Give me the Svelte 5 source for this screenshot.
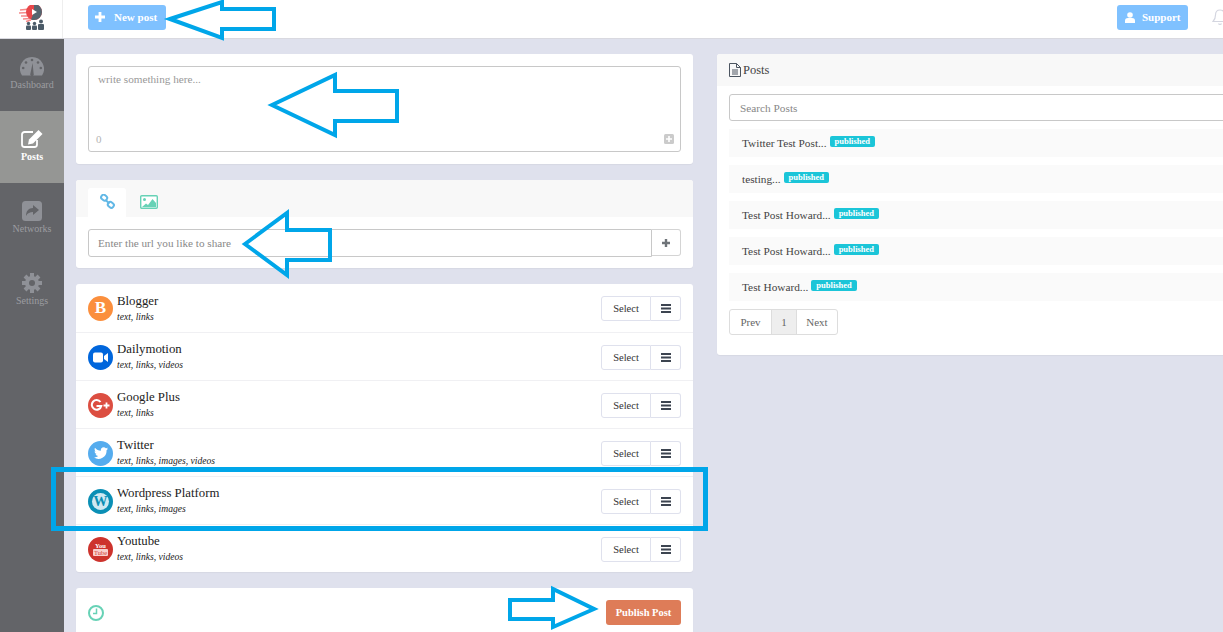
<script lang="ts">
    const networks = [
        { name: "Blogger", caps: "text, links", icon: "blogger", color: "#fb8f3d" },
        { name: "Dailymotion", caps: "text, links, videos", icon: "dailymotion", color: "#0066dc" },
        { name: "Google Plus", caps: "text, links", icon: "google", color: "#dc4e41" },
        { name: "Twitter", caps: "text, links, images, videos", icon: "twitter", color: "#55acee" },
        { name: "Wordpress Platform", caps: "text, links, images", icon: "wordpress", color: "#0a8fb5" },
        { name: "Youtube", caps: "text, links, videos", icon: "youtube", color: "#cd332d" },
    ];

    const posts = [
        "Twitter Test Post...",
        "testing...",
        "Test Post Howard...",
        "Test Post Howard...",
        "Test Howard...",
    ];
</script>

<div class="page">
    <header class="topbar">
        <div class="logo">
            <svg width="28" height="26" viewBox="0 0 28 26">
                <path d="M1 5l10-1M0 8l10-.5M2 11l8 0M4 14l7-.5M7 16.500l5-1.500" stroke="#f58a8a" stroke-width="1.500" fill="none" />
                <circle cx="15" cy="7" r="8" fill="#e8474a" />
                <path d="M15-1a8 8 0 0 1 0 16 8 8 0 0 1-3-.6L15 7z" fill="#56656f" />
                <path d="M13 4l5 3-5 3z" fill="#fff" />
                <g fill="#4b5b68">
                    <circle cx="9.500" cy="18.500" r="1.700" /><rect x="7" y="20.500" width="5" height="4.500" rx="1" />
                    <circle cx="15.500" cy="18.500" r="1.700" /><rect x="13" y="20.500" width="5" height="4.500" rx="1" />
                    <circle cx="22" cy="16.500" r="2" /><rect x="19" y="19" width="6" height="6" rx="1" />
                </g>
            </svg>
        </div>
        <div class="topbar-body">
            <button type="button" class="top-btn new-post">
                <svg width="10" height="10" viewBox="0 0 10 10"><path d="M5 0v10M0 5h10" stroke="#fff" stroke-width="2.800" /></svg>
                New post
            </button>
            <div class="top-right">
                <button type="button" class="top-btn support">
                    <svg width="10" height="11" viewBox="0 0 10 11" fill="#fff"><circle cx="5" cy="3" r="2.800" /><path d="M0 11V8.500C0 6.800 1.500 6 2.800 6h4.400C8.500 6 10 6.800 10 8.500V11z" /></svg>
                    Support
                </button>
                <svg class="bell" width="16" height="18" viewBox="0 0 16 18" fill="none" stroke="#d4d6e0" stroke-width="1.200">
                    <path d="M8 2c3 0 4.500 2 4.500 5 0 4 1 5 2.500 6.500H1C2.500 12 3.500 11 3.500 7 3.500 4 5 2 8 2z" />
                    <path d="M6.500 15.500c.5 1.200 2.500 1.200 3 0" />
                </svg>
            </div>
        </div>
    </header>

    <div class="shell">
        <nav class="sidebar">
            <div class="nav-item">
                <svg width="24" height="20" viewBox="0 0 24 20" fill="#8f9197">
                    <path d="M12 0a12 12 0 0 1 10 18.600H2A12 12 0 0 1 12 0z" />
                    <g fill="#636468"><circle cx="12" cy="3" r="1.300" /><circle cx="6" cy="5.500" r="1.300" /><circle cx="18" cy="5.500" r="1.300" /><circle cx="3.200" cy="11" r="1.300" /><circle cx="20.800" cy="11" r="1.300" /></g>
                    <path d="M12.600 6l1 10.500a1.800 1.800 0 1 1-3.200 0z" fill="#636468" />
                </svg>
                <span>Dashboard</span>
            </div>
            <div class="nav-item active">
                <svg width="24" height="20" viewBox="0 0 24 20" fill="none">
                    <path d="M17 11v4.500a2.500 2.500 0 0 1-2.500 2.500h-10A2.500 2.500 0 0 1 2 15.500v-10A2.500 2.500 0 0 1 4.500 3H13" stroke="#fff" stroke-width="1.800" />
                    <path d="M18.500 1l4 4-9.500 9.500-5 1 1-5z" fill="#fff" />
                </svg>
                <span>Posts</span>
            </div>
            <div class="nav-item">
                <svg width="20" height="20" viewBox="0 0 20 20">
                    <rect width="20" height="20" rx="3.500" fill="#8f9197" />
                    <path d="M11 4l6 5-6 5v-3C8 11 5.500 12 4 15c0-5 2.500-8 7-8z" fill="#636468" />
                </svg>
                <span>Networks</span>
            </div>
            <div class="nav-item">
                <svg width="20" height="20" viewBox="0 0 20 20">
                    <path d="M10 0v20M0 10h20M3 3l14 14M17 3L3 17" stroke="#8f9197" stroke-width="4" />
                    <circle cx="10" cy="10" r="7" fill="#8f9197" />
                    <circle cx="10" cy="10" r="3" fill="#636468" />
                </svg>
                <span>Settings</span>
            </div>
        </nav>

        <main class="content">
            <div class="col-left">
                <section class="card compose">
                    <div class="textarea">
                        <span class="placeholder">write something here...</span>
                        <span class="count">0</span>
                    </div>
                    <svg class="expand" width="10" height="10" viewBox="0 0 10 10">
                        <rect width="10" height="10" rx="1.500" fill="#cbcbcb" />
                        <path d="M5 2v6M2 5h6" stroke="#fff" stroke-width="1.600" />
                    </svg>
                </section>

                <section class="card attach">
                    <div class="tabs">
                        <div class="tab current">
                            <svg width="15" height="15" viewBox="0 0 15 15" fill="none" stroke="#62b8e6" stroke-width="2">
                                <rect x="1.200" y="1" width="6" height="5" rx="2.200" transform="rotate(40 4 3.500)" />
                                <rect x="7.800" y="8.500" width="6" height="5" rx="2.200" transform="rotate(40 11 11)" />
                                <path d="M5.500 6l4 3.500" />
                            </svg>
                        </div>
                        <div class="tab">
                            <svg width="18" height="14" viewBox="0 0 18 14">
                                <rect x=".7" y=".7" width="16.600" height="12.600" rx="1" fill="#fff" stroke="#67d2b6" stroke-width="1.400" />
                                <circle cx="4.500" cy="4.500" r="1.500" fill="#67d2b6" />
                                <path d="M2 12l4-3.500 2 1.500 4.500-6L16 8v4z" fill="#67d2b6" />
                            </svg>
                        </div>
                    </div>
                    <div class="url-row">
                        <div class="url-input">Enter the url you like to share</div>
                        <div class="url-add">
                            <svg width="10" height="10" viewBox="0 0 10 10"><path d="M5 1v8M1 5h8" stroke="#6f7479" stroke-width="2.400" /></svg>
                        </div>
                    </div>
                </section>

                <section class="card networks">
                    {#each networks as net}
                        <div class="net-row">
                            <div class="net-icon" style="background: {net.color}">
                                {#if net.icon === "blogger"}
                                    <span class="blogger-b">B</span>
                                {:else if net.icon === "dailymotion"}
                                    <svg width="15" height="11" viewBox="0 0 15 11" fill="#fff"><rect y=".5" width="10" height="10" rx="2" /><path d="M11 4l4-3v9l-4-3z" /></svg>
                                {:else if net.icon === "google"}
                                    <svg width="21" height="13" viewBox="0 0 21 13" fill="none" stroke="#fff" stroke-width="2">
                                        <path d="M10.500 3a4.800 4.800 0 1 0 .8 4H6.500" />
                                        <path d="M16.500 3.500v6M13.500 6.500h6" stroke-width="1.800" />
                                    </svg>
                                {:else if net.icon === "twitter"}
                                    <svg width="14" height="12" viewBox="0 0 24 20" fill="#fff"><path d="M24 2.400c-.9.400-1.800.7-2.800.8 1-.6 1.800-1.600 2.200-2.700-1 .6-2 1-3.100 1.200A4.900 4.900 0 0 0 11.900 6.200C7.800 6 4.200 4.100 1.700.9.400 3.100 1 6 3.200 7.500c-.8 0-1.600-.2-2.200-.6 0 2.300 1.600 4.400 3.900 4.900-.7.200-1.500.2-2.200.1.600 2 2.400 3.400 4.600 3.400A9.900 9.900 0 0 1 0 17.800 13.900 13.900 0 0 0 21.500 5.400c1-.7 1.800-1.600 2.500-3z" /></svg>
                                {:else if net.icon === "wordpress"}
                                    <span class="wp-mark">W</span>
                                {:else}
                                    <span class="yt-mark"><b>You</b><i>Tube</i></span>
                                {/if}
                            </div>
                            <div class="net-text">
                                <div class="net-name">{net.name}</div>
                                <div class="net-caps">{net.caps}</div>
                            </div>
                            <div class="btn-group">
                                <button type="button" class="select-btn">Select</button>
                                <button type="button" class="menu-btn" aria-label="Options">
                                    <svg width="10" height="9" viewBox="0 0 10 9"><path d="M0 1h10M0 4.500h10M0 8h10" stroke="#3c4450" stroke-width="1.800" /></svg>
                                </button>
                            </div>
                        </div>
                    {/each}
                </section>

                <section class="card publish">
                    <svg width="16" height="16" viewBox="0 0 16 16" fill="none" stroke="#67d2b6" stroke-width="2">
                        <circle cx="8" cy="8" r="7" />
                        <path d="M8.500 3.500v5H5" stroke-width="1.500" />
                    </svg>
                    <button type="button" class="publish-btn">Publish Post</button>
                </section>
            </div>

            <section class="card posts">
                <div class="posts-head">
                    <svg width="12" height="14" viewBox="0 0 12 14" fill="none" stroke="#4c5560" stroke-width="1">
                        <path d="M.5.500h7l4 4v9H.5z" />
                        <path d="M7.500.5v4h4M3 7h6M3 9h6M3 11h6" />
                    </svg>
                    Posts
                </div>
                <div class="posts-body">
                    <div class="search">Search Posts</div>
                    {#each posts as title}
                        <div class="post-row">
                            <span>{title}</span>
                            <span class="badge">published</span>
                        </div>
                    {/each}
                    <div class="pager">
                        <span>Prev</span>
                        <span class="on">1</span>
                        <span>Next</span>
                    </div>
                </div>
            </section>
        </main>
    </div>

    <!-- hand-drawn annotations sitting on top of the screenshot -->
    <svg class="notes" width="1223" height="632" viewBox="0 0 1223 632" fill="none" stroke="#00a6e9" stroke-width="4">
        <path d="M170 19L222 2v7h52v20h-52v9z" />
        <path d="M272 105l63-30v16h62v30h-62v14z" />
        <path d="M245 244l42-31v17h43v30h-43v15z" />
        <path d="M510 600h43v-11l41 20-41 18v-8h-43z" />
        <rect x="53.500" y="469.500" width="652" height="59" stroke-width="5" />
    </svg>
</div>

<style>
    :global(body) {
        margin: 0;
    }

    .page {
        position: relative;
        width: 1223px;
        height: 632px;
        overflow: hidden;
        background: #dfe1ed;
        font-family: "Liberation Serif", "Times New Roman", serif;
        font-size: 12px;
        color: #333;
    }

    .topbar {
        display: flex;
        height: 38px;
        background: #fff;
        border-bottom: 1px solid #d9d9e0;
    }

    .logo {
        flex: none;
        width: 63px;
        border-right: 1px solid #eee;
        display: flex;
        align-items: flex-start;
        justify-content: center;
        padding: 5px 0 0 4px;
        box-sizing: border-box;
    }

    .topbar-body {
        flex: 1;
        display: flex;
        align-items: center;
        justify-content: space-between;
        padding: 0 0 4px 25px;
    }

    .top-btn {
        height: 25px;
        border: 0;
        border-radius: 3px;
        background: #7fc1ff;
        color: #fff;
        font: bold 11px "Liberation Serif", serif;
        display: flex;
        align-items: center;
        padding: 0;
    }

    .new-post {
        width: 78px;
        gap: 9px;
        padding-left: 7px;
    }

    .support {
        width: 71px;
        gap: 7px;
        padding-left: 8px;
    }

    .top-right {
        display: flex;
        align-items: center;
        gap: 24px;
        margin-right: -5px;
    }

    .shell {
        display: flex;
        height: 593px;
    }

    .sidebar {
        flex: none;
        width: 64px;
        background: #636468;
    }

    .nav-item {
        height: 72px;
        box-sizing: border-box;
        padding-top: 18px;
        display: flex;
        flex-direction: column;
        align-items: center;
        gap: 2px;
        color: #9c9da1;
        font-size: 10px;
    }

    .nav-item.active {
        background: #959694;
        color: #fff;
        font-weight: bold;
    }

    .content {
        display: grid;
        grid-template-columns: 617px 560px;
        gap: 24px;
        align-items: start;
        padding: 15px 0 0 12px;
    }

    .col-left {
        display: flex;
        flex-direction: column;
        gap: 16px;
    }

    .card {
        background: #fff;
        border-radius: 3px;
        box-shadow: 0 1px 1px rgba(0, 0, 0, 0.04);
    }

    .compose {
        position: relative;
        height: 110px;
        box-sizing: border-box;
        padding: 12px;
    }

    .textarea {
        height: 86px;
        box-sizing: border-box;
        border: 1px solid #c8c8c8;
        border-radius: 3px;
        padding: 6px 9px;
        display: flex;
        flex-direction: column;
        justify-content: space-between;
        color: #999;
        font-size: 11.200px;
    }

    .count {
        margin-left: -2px;
        color: #b4b4b4;
        font-size: 11px;
        line-height: 14px;
        margin-bottom: -1px;
    }

    .expand {
        position: absolute;
        right: 19px;
        bottom: 20px;
    }

    .attach {
        height: 88px;
    }

    .tabs {
        height: 37px;
        box-sizing: border-box;
        padding: 8px 12px 0;
        background: #f8f8f8;
        display: flex;
        border-radius: 3px 3px 0 0;
    }

    .tab {
        width: 45px;
        height: 29px;
        display: flex;
        align-items: center;
        justify-content: center;
        box-sizing: border-box;
        padding-bottom: 2px;
    }

    .tab.current {
        width: 38px;
        margin-right: 0;
        background: #fff;
        border-radius: 3px 3px 0 0;
    }

    .url-row {
        display: flex;
        padding: 12px 12px 0;
    }

    .url-input {
        width: 564px;
        height: 28px;
        box-sizing: border-box;
        border: 1px solid #c8c8c8;
        border-radius: 3px 0 0 3px;
        padding: 0 9px;
        line-height: 26px;
        color: #888;
        font-size: 11.200px;
    }

    .url-add {
        width: 29px;
        height: 27px;
        box-sizing: border-box;
        border: 1px solid #d4d4d4;
        border-left: 0;
        border-radius: 0 3px 3px 0;
        display: flex;
        align-items: center;
        justify-content: center;
    }

    .net-row {
        height: 48px;
        box-sizing: border-box;
        padding: 1px 12px 0;
        display: flex;
        align-items: center;
        border-top: 1px solid #f0f0f3;
    }

    .net-row:first-child {
        border-top: 0;
        padding-top: 0;
    }

    .net-row:first-child .net-text {
        padding-top: 2px;
    }

    .net-icon {
        flex: none;
        width: 25px;
        height: 25px;
        border-radius: 50%;
        display: flex;
        align-items: center;
        justify-content: center;
        overflow: hidden;
    }

    .blogger-b {
        color: #fff;
        font-size: 17px;
        font-weight: bold;
    }

    .wp-mark {
        width: 17px;
        height: 17px;
        border-radius: 50%;
        background: #cfe9f2;
        color: #0a8fb5;
        font-size: 14px;
        font-weight: bold;
        line-height: 17px;
        text-align: center;
    }

    .yt-mark {
        display: flex;
        flex-direction: column;
        align-items: center;
        color: #fff;
        font-size: 6.500px;
        line-height: 7px;
    }

    .yt-mark i {
        font-style: normal;
        background: #f8d0ce;
        color: #d33c36;
        border-radius: 1px;
        padding: 0 1px;
    }

    .net-text {
        flex: 1;
        padding-left: 4px;
        padding-top: 1px;
    }

    .net-name {
        font-size: 12.800px;
        line-height: 15px;
        color: #222;
    }

    .net-caps {
        font-size: 9.600px;
        font-style: italic;
        line-height: 16px;
        color: #222;
    }

    .btn-group {
        display: flex;
        height: 25px;
    }

    .select-btn,
    .menu-btn {
        background: #fff;
        border: 1px solid #dfe1ed;
        padding: 0;
        font: 10.500px "Liberation Serif", serif;
        color: #333;
    }

    .select-btn {
        width: 50px;
        border-radius: 3px 0 0 3px;
    }

    .menu-btn {
        width: 30px;
        border-left: 0;
        border-radius: 0 3px 3px 0;
        display: flex;
        align-items: center;
        justify-content: center;
    }

    .publish {
        height: 60px;
        box-sizing: border-box;
        padding: 12px 12px 0 12px;
        display: flex;
        align-items: flex-start;
        justify-content: space-between;
    }

    .publish svg {
        margin: 5px 0 0 0;
    }

    .publish-btn {
        width: 75px;
        height: 25px;
        border: 0;
        border-radius: 3px;
        background: #de7c58;
        color: #fff;
        font: bold 10.500px "Liberation Serif", serif;
        padding: 0;
    }

    .posts {
        height: 301px;
    }

    .posts-head {
        height: 32px;
        background: #f8f8f8;
        border-radius: 3px 3px 0 0;
        display: flex;
        align-items: center;
        gap: 2px;
        padding-left: 12px;
        font-size: 12.500px;
        color: #444;
    }

    .posts-body {
        padding: 8px 12px 0;
    }

    .search {
        height: 27px;
        box-sizing: border-box;
        border: 1px solid #c8c8c8;
        border-radius: 3px;
        padding: 0 10px;
        line-height: 26px;
        color: #888;
        font-size: 11.300px;
    }

    .post-row {
        height: 28px;
        margin-top: 8px;
        background: #fafafa;
        padding-left: 13px;
        display: flex;
        align-items: center;
        gap: 3px;
        font-size: 11.300px;
        color: #444;
    }

    .badge {
        height: 11px;
        line-height: 11px;
        margin-top: -4px;
        padding: 0 5px;
        background: #1bc5d8;
        border-radius: 2px;
        color: #fff;
        font-size: 8.500px;
        font-weight: bold;
    }

    .pager {
        display: inline-flex;
        height: 26px;
        margin-top: 8px;
        border: 1px solid #ddd;
        border-radius: 3px;
        box-sizing: border-box;
        color: #666;
        font-size: 11px;
        line-height: 24px;
    }

    .pager span {
        width: 41px;
        text-align: center;
        box-sizing: border-box;
        border-left: 1px solid #ddd;
    }

    .pager span:first-child {
        border-left: 0;
    }

    .pager .on {
        width: 25px;
        background: #eee;
    }

    .notes {
        position: absolute;
        inset: 0;
        pointer-events: none;
    }
</style>
